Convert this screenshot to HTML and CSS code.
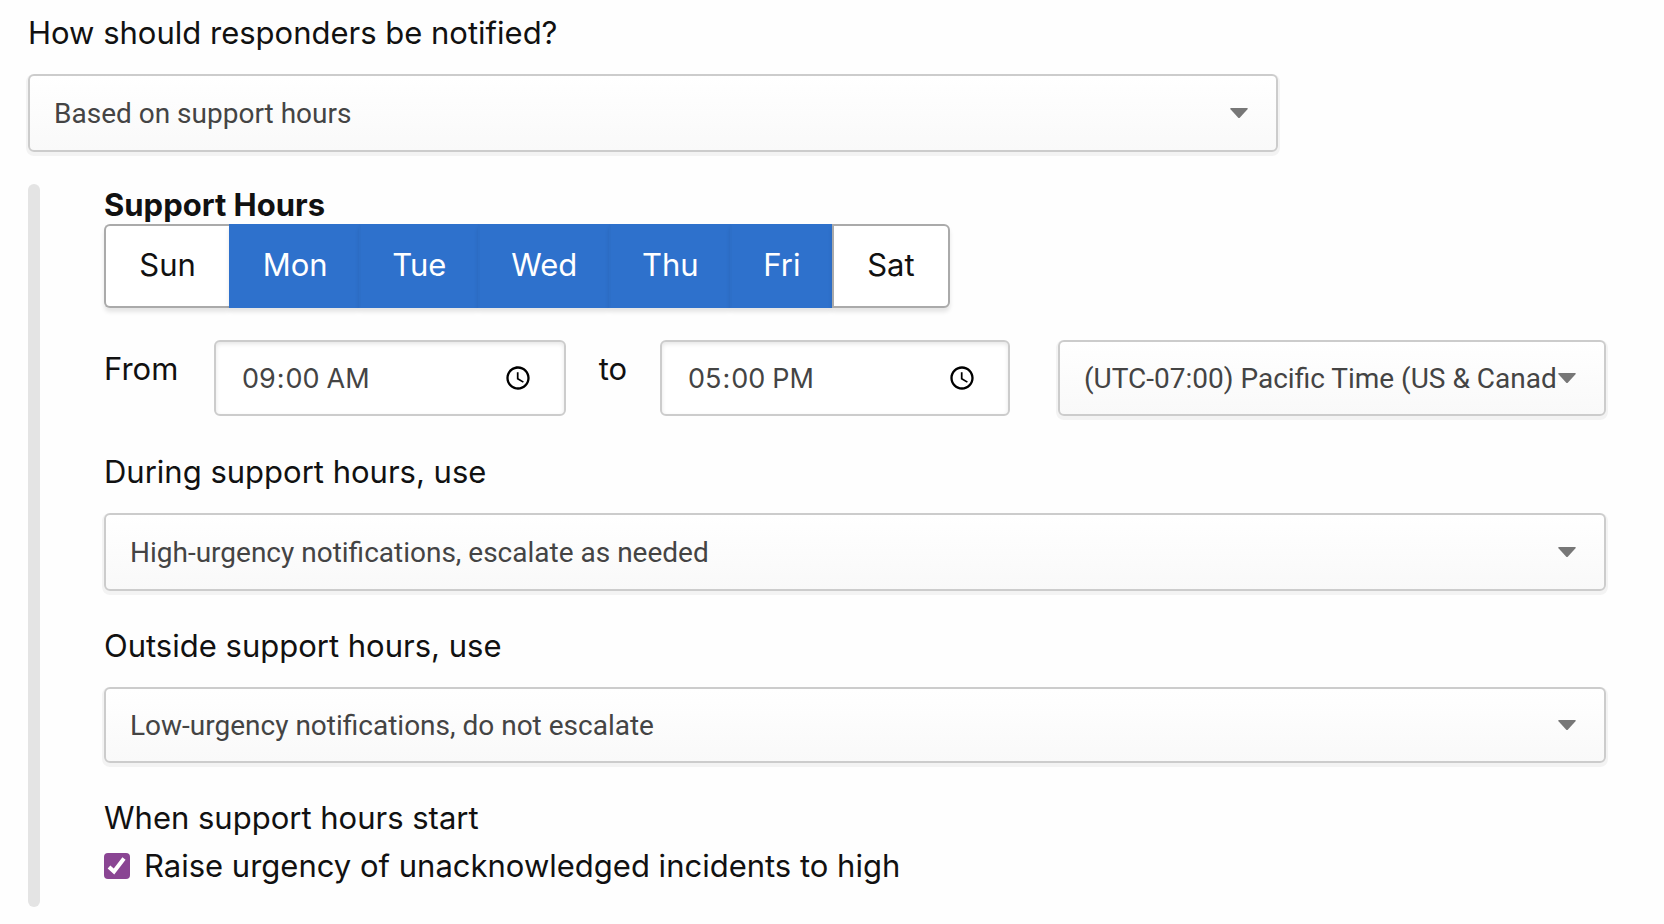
FILE: index.html
```
<!DOCTYPE html>
<html lang="en-US">
<head>
    <meta charset="UTF-8">
    <meta name="viewport" content="width=device-width, initial-scale=1.0">
    <title>Support hours</title>
    <link rel="stylesheet" href="styles.css">
</head>
<body>
    <form class="urgency">
        <div class="field notify">
            <label class="label" for="notify">How should responders be notified?</label>
            <div class="select">
                <select id="notify">
                    <option>Based on support hours</option>
                </select>
                <svg class="caret" viewBox="0 0 18 10"><path d="M1 0h16q1.500 0 .5 1.200L10 9.400q-1 1-2 0L.5 1.200Q-.5 0 1 0z"/></svg>
            </div>
        </div>
        <div class="support">
            <h2 class="title" id="support-title">Support Hours</h2>
            <div class="days" role="group" aria-labelledby="support-title">
                <button type="button" class="day" aria-pressed="false">Sun</button>
                <button type="button" class="day selected" aria-pressed="true">Mon</button>
                <button type="button" class="day selected" aria-pressed="true">Tue</button>
                <button type="button" class="day selected" aria-pressed="true">Wed</button>
                <button type="button" class="day selected" aria-pressed="true">Thu</button>
                <button type="button" class="day selected" aria-pressed="true">Fri</button>
                <button type="button" class="day" aria-pressed="false">Sat</button>
            </div>
            <div class="times">
                <label class="time-label" for="from">From</label>
                <input class="time" id="from" type="time" value="09:00">
                <label class="time-label to" for="to">to</label>
                <input class="time" id="to" type="time" value="17:00">
                <div class="select zone">
                    <select aria-label="Time zone">
                        <option>(UTC-07:00) Pacific Time (US &amp; Canada)</option>
                    </select>
                    <svg class="caret" viewBox="0 0 18 10"><path d="M1 0h16q1.500 0 .5 1.200L10 9.400q-1 1-2 0L.5 1.200Q-.5 0 1 0z"/></svg>
                </div>
            </div>
            <div class="field">
                <label class="label" for="during">During support hours, use</label>
                <div class="select">
                    <select id="during">
                        <option>High-urgency notifications, escalate as needed</option>
                    </select>
                    <svg class="caret" viewBox="0 0 18 10"><path d="M1 0h16q1.500 0 .5 1.200L10 9.400q-1 1-2 0L.5 1.200Q-.5 0 1 0z"/></svg>
                </div>
            </div>
            <div class="field outside">
                <label class="label" for="outside">Outside support hours, use</label>
                <div class="select">
                    <select id="outside">
                        <option>Low-urgency notifications, do not escalate</option>
                    </select>
                    <svg class="caret" viewBox="0 0 18 10"><path d="M1 0h16q1.500 0 .5 1.200L10 9.400q-1 1-2 0L.5 1.200Q-.5 0 1 0z"/></svg>
                </div>
            </div>
            <div class="start">When support hours start</div>
            <label class="raise">
                <input type="checkbox" checked>
                <span>Raise urgency of unacknowledged incidents to high</span>
            </label>
        </div>
    </form>
</body>
</html>
```
FILE: styles.css
```
*{
    box-sizing: border-box;
}
body{
    margin: 0;
    background-color: #fefefe;
    color: #111;
    font-family: Inter, sans-serif;
    font-size: 31px;
    line-height: 40px;
}
button,input,select{
    font-family: inherit;
    margin: 0;
}
.urgency{
    padding: 13px 58px 18px 28px;
}
.label{
    display: block;
    margin-bottom: 21px;
}
.notify .select{
    width: 79.2%;
}
.select{
    display: grid;
    align-items: center;
}
.select select,.select .caret{
    grid-area: 1 / 1;
}
.select select{
    appearance: none;
    width: 100%;
    min-width: 0;
    height: 78px;
    padding: 0 46px 0 24px;
    border: 2px solid #ccc;
    border-radius: 6px;
    background: linear-gradient(#fff, #f9f9f9);
    box-shadow: 0 2px 0 2px #f3f3f3;
    color: #444;
    font-family: Roboto, sans-serif;
    font-size: 28px;
}
.caret{
    justify-self: end;
    width: 18px;
    height: 10px;
    margin-right: 30px;
    fill: #777;
    pointer-events: none;
}
/* grey bar down the left side */
.support{
    position: relative;
    margin-top: 32px;
    padding: 1px 0 21px 76px;
}
.support::before{
    content: "";
    position: absolute;
    left: 0;
    top: 0;
    bottom: 0;
    width: 12px;
    border-radius: 6px;
    background-color: #e4e4e4;
}
.title{
    margin: 0;
    font-size: 31px;
    font-weight: 700;
    line-height: 39px;
}
.days{
    display: flex;
    width: 846px;
    max-width: 100%;
}
.day{
    flex: 1 1 auto;
    height: 84px;
    padding: 0 20px 4px;
    border: 2px solid #aaa;
    border-right-width: 0;
    background-color: #fff;
    box-shadow: 0 4px 4px rgba(0, 0, 0, .1);
    color: #111;
    font-size: 31px;
    cursor: pointer;
}
.day:first-child{
    padding: 0 22px 4px;
    border-radius: 6px 0 0 6px;
}
.day:last-child{
    padding: 0 22px 4px;
    border-right-width: 2px;
    border-radius: 0 6px 6px 0;
}
.day.selected{
    border-color: #2e71cc;
    border-left-color: #2d6fc8;
    background-color: #2e71cc;
    color: #fff;
}
.day:first-child + .selected{
    border-left-color: #2e71cc;
}
.times{
    display: grid;
    grid-template-columns: 110px 352fr 94px 350fr 596fr;
    align-items: start;
    margin: 32px 0 36px;
}
.time-label{
    padding-top: 9px;
}
.to{
    text-align: center;
}
.time{
    width: 100%;
    min-width: 0;
    height: 76px;
    padding: 0 32px 0 25px;
    border: 2px solid #ccc;
    border-radius: 6px;
    background-color: #fff;
    box-shadow: inset 0 2px 4px rgba(0, 0, 0, .1);
    color: #444;
    font-size: 27px;
}
.time::-webkit-calendar-picker-indicator{
    width: 28px;
    height: 28px;
    padding: 0;
}
.zone{
    margin-left: 48px;
}
.zone select,.outside select{
    height: 76px;
}
.field + .field,.start{
    margin-top: 35px;
}
.raise{
    display: flex;
    align-items: center;
    gap: 14px;
    margin-top: 8px;
}
.raise input{
    appearance: none;
    width: 26px;
    height: 26px;
    border-radius: 4px;
    background: #8a4593 url("data:image/svg+xml,%3Csvg xmlns='http://www.w3.org/2000/svg' viewBox='0 0 26 26'%3E%3Cpath d='M5 14l5 4.500L20 5.500' fill='none' stroke='white' stroke-width='4'/%3E%3C/svg%3E");
}
```
